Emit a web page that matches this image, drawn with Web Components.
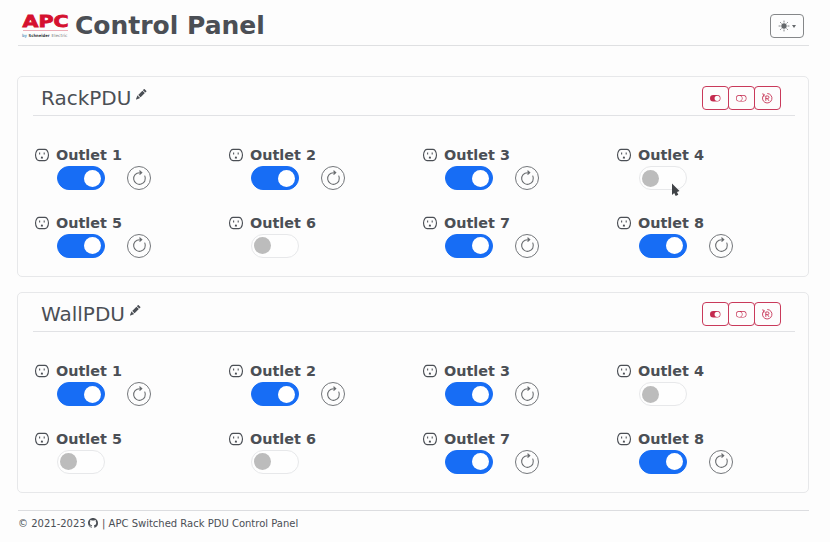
<!DOCTYPE html>
<html lang="en"><head><meta charset="utf-8"><title>APC Control Panel</title>
<style>
html,body{margin:0;height:100%;overflow:hidden;background:#fdfdfd}
body{font-family:"DejaVu Sans",sans-serif;color:#4b4f55}
</style></head><body>
<control-panel></control-panel>
<script>
const make = (name, html) => customElements.define(name, class extends HTMLElement {
  connectedCallback() {
    if (this.shadowRoot) return;
    this.attachShadow({mode:'open'}).innerHTML = typeof html === 'function' ? html(this) : html;
  }
});

const icons = {
  sun:'<circle cx="8" cy="8" r="4.3"/><path d="M8 0v1.8M8 14.2V16M0 8h1.8M14.2 8H16M2.3 2.3l1.2 1.2M12.5 12.5l1.2 1.2M2.3 13.7l1.2-1.2M12.5 3.5l1.2-1.2" stroke="currentColor" stroke-width="1.3" stroke-linecap="round"/>',
  pencil:'<path d="M12.854.146a.5.5 0 0 0-.707 0L10.5 1.793 14.207 5.5l1.647-1.646a.5.5 0 0 0 0-.708zm.646 6.061L9.793 2.5 3.293 9H3.5a.5.5 0 0 1 .5.5v.5h.5a.5.5 0 0 1 .5.5v.5h.5a.5.5 0 0 1 .5.5v.5h.5a.5.5 0 0 1 .5.5v.207zm-7.468 7.468A.5.5 0 0 1 6 13.5V13h-.5a.5.5 0 0 1-.5-.5V12h-.5a.5.5 0 0 1-.5-.5V11h-.5a.5.5 0 0 1-.5-.5V10h-.5a.5.5 0 0 1-.175-.032l-.179.178a.5.5 0 0 0-.11.168l-2 5a.5.5 0 0 0 .65.65l5-2a.5.5 0 0 0 .168-.11z"/>',
  outlet:'<path d="M4.600 1.600h6.800c1 0 1.700.4 2.300 1.100Q15.400 5 15.400 8t-1.700 5.300c-.6.700-1.300 1.100-2.300 1.100H4.600c-1 0-1.700-.4-2.300-1.100Q.6 11 .6 8t1.700-5.300C2.900 2 3.600 1.600 4.600 1.600z" fill="none" stroke="currentColor" stroke-width="1.300"/><path d="M5.300 5v2.300M10.500 5v2.300" stroke="currentColor" stroke-width="1.200"/><path d="M6.700 12v-1a1.200 1.200 0 0 1 2.400 0v1z"/>',
  restart:'<path fill-rule="evenodd" d="M8 3a5 5 0 1 0 4.546 2.914.5.5 0 0 1 .908-.417A6 6 0 1 1 8 2z"/><path d="M8 4.466V.534a.25.25 0 0 1 .41-.192l2.36 1.966c.12.1.12.284 0 .384L8.41 4.658A.25.25 0 0 1 8 4.466"/>',
  on:'<path d="M5 3a5 5 0 0 0 0 10h6a5 5 0 0 0 0-10zm6 9a4 4 0 1 1 0-8 4 4 0 0 1 0 8"/>',
  off:'<path d="M11 4a4 4 0 0 1 0 8H8a5 5 0 0 0 2-4 5 5 0 0 0-2-4zm-6 8a4 4 0 1 1 0-8 4 4 0 0 1 0 8M0 8a5 5 0 0 0 5 5h6a5 5 0 0 0 0-10H5a5 5 0 0 0-5 5"/>',
  reboot:'<path d="M2.6 3.2A7.2 7.2 0 1 0 8 .8M.3 1.3l3.2.9-.9 3.6" fill="none" stroke="currentColor" stroke-width="1.3"/><path d="M5.8 12V4.5h2.8a2 2 0 0 1 0 4H5.8M8.3 8.5l2.3 3.5" fill="none" stroke="currentColor" stroke-width="1.3"/>',
  github:'<path d="M8 0C3.58 0 0 3.58 0 8c0 3.54 2.29 6.53 5.47 7.59.4.07.55-.17.55-.38 0-.19-.01-.82-.01-1.49-2.01.37-2.53-.49-2.69-.94-.09-.23-.48-.94-.82-1.13-.28-.15-.68-.52-.01-.53.63-.01 1.08.58 1.23.82.72 1.21 1.87.87 2.33.66.07-.52.28-.87.51-1.07-1.78-.2-3.64-.89-3.64-3.95 0-.87.31-1.59.82-2.15-.08-.2-.36-1.02.08-2.12 0 0 .67-.21 2.2.82.64-.18 1.32-.27 2-.27s1.36.09 2 .27c1.53-1.04 2.2-.82 2.2-.82.44 1.1.16 1.92.08 2.12.51.56.82 1.27.82 2.15 0 3.07-1.87 3.75-3.65 3.95.29.25.54.73.54 1.48 0 1.07-.01 1.93-.01 2.2 0 .21.15.46.55.38A8.01 8.01 0 0 0 16 8c0-4.42-3.58-8-8-8"/>'
};
make('ui-icon', el => `<style>:host{display:inline-block;width:var(--s,12px);height:var(--s,12px);flex:none}svg{display:block;width:100%;height:100%}</style><svg viewBox="0 0 16 16" fill="currentColor" overflow="visible">${icons[el.getAttribute('name')]}</svg>`);

make('apc-logo', `<style>:host{display:block;width:48px;height:30px;flex:none}svg{display:block;overflow:visible}
.a{font:bold 16px "DejaVu Sans",sans-serif;fill:#d5112f;stroke:#d5112f;stroke-width:.8}.b{font:bold 4.2px "DejaVu Sans",sans-serif;fill:#34373c}</style>
<svg width="48" height="30" viewBox="0 -4 48 30"><text class="a" x="0.5" y="13" textLength="46" lengthAdjust="spacingAndGlyphs">APC</text>
<path d="M1 16.5h45" stroke="#e99aa6" stroke-width=".8"/>
<text class="b" x="0" y="23" textLength="5" lengthAdjust="spacingAndGlyphs" style="fill:#6d9fc4">by</text>
<text class="b" x="6.5" y="23" textLength="21" lengthAdjust="spacingAndGlyphs">Schneider</text>
<text class="b" x="29.5" y="23" textLength="16" lengthAdjust="spacingAndGlyphs" style="font-weight:400;fill:#777">Electric</text></svg>`);

make('theme-button', `<style>:host{display:flex;box-sizing:border-box;width:34px;height:24px;border:1px solid #858789;border-radius:4px;align-items:center;justify-content:center;gap:3px;color:#65686b;--s:10px}
i{border:2.5px solid transparent;border-top:3px solid #65686b;border-bottom:0}</style><ui-icon name="sun"></ui-icon><i></i>`);

make('page-header', `<style>:host{display:flex;box-sizing:border-box;height:46px;border-bottom:1px solid #dfe0e2;padding:0 5px 0 4px;align-items:flex-start}
apc-logo{margin-top:10px}h1{margin:9px auto 0 5px;font-size:25px;line-height:34px;font-weight:700;white-space:nowrap}theme-button{margin-top:14px}</style>
<apc-logo></apc-logo><h1><slot></slot></h1><theme-button></theme-button>`);

make('group-actions', `<style>:host{display:flex;height:24px;color:#c42b4f;--s:10.5px}
button{all:unset;box-sizing:border-box;width:27px;height:24px;border:1px solid #c93a5b;border-radius:4px;display:flex;align-items:center;justify-content:center}
button+button{margin-left:-1px}</style><button><ui-icon name="on"></ui-icon></button><button><ui-icon name="off"></ui-icon></button><button><ui-icon name="reboot"></ui-icon></button>`);

make('power-switch', `<style>:host{display:flex;box-sizing:border-box;width:48px;height:24px;border-radius:12px;border:1px solid #e7e8ea;background:#fefefe;align-items:center;padding:0 3px 0 2px}
i{width:17px;height:17px;border-radius:50%;background:#bcbcbc}
:host([on]){background:#176df5;border-color:#176df5;justify-content:flex-end}:host([on]) i{background:#fff}</style><i></i>`);

make('pdu-outlet', el => `<style>:host{display:block;height:67.5px}
.t{display:flex;align-items:center;height:20px;gap:7.5px;font-weight:700;font-size:14.4px;white-space:nowrap;--s:14px}
.c{display:flex;gap:22px;padding:1px 0 0 22.5px}
.r{box-sizing:border-box;width:24px;height:24px;border:1px solid #74777b;border-radius:50%;display:flex;align-items:center;justify-content:center;color:#6a6d70;--s:17px}</style>
<div class="t"><ui-icon name="outlet"></ui-icon><span><slot></slot></span></div>
<div class="c"><power-switch ${el.hasAttribute('on')?'on':''}></power-switch>${el.hasAttribute('on')?'<div class="r"><ui-icon name="restart"></ui-icon></div>':''}</div>`);

make('pdu-card', el => `<style>:host{display:block;box-sizing:border-box;height:201px;border:1px solid #e7e8ea;border-radius:5px;margin:0 0 15px -1px;padding:0 13px 0 15px}
header{display:flex;height:38px;border-bottom:1px solid #e1e2e5;padding:0 14px 0 8px;align-items:flex-start}
h2{margin:8px 0 0;font-size:20px;line-height:26px;font-weight:400;white-space:nowrap}
.e{margin:12px auto 0 5px;--s:10.5px}group-actions{margin-top:9px}
.g{display:grid;grid-template-columns:repeat(4,194px);padding:29px 0 0 1.5px;width:760px}</style>
<header><h2>${el.getAttribute('name')}</h2><ui-icon class="e" name="pencil"></ui-icon><group-actions></group-actions></header>
<div class="g">${[...el.getAttribute('states')].map((s,i)=>`<pdu-outlet ${s==='1'?'on':''}>Outlet ${i+1}</pdu-outlet>`).join('')}</div>`);

make('page-footer', `<style>:host{display:flex;align-items:center;height:25px;border-top:1px solid #dcdde0;margin-top:17px;font-size:10px;white-space:pre;--s:10px}ui-icon{margin:-1px .5px 0 -.5px}</style>
<span>© 2021-2023 </span><ui-icon name="github"></ui-icon><span> | APC Switched Rack PDU Control Panel</span>`);

make('mouse-pointer', `<style>:host{position:absolute;left:671px;top:183px}svg{display:block}</style><svg width="9" height="14"><path d="M1 .5v11.5l2.2-2 1.5 3 2.6-1.2L6 9l2.5-1z" fill="#404347"/></svg>`);

make('control-panel', `<style>:host{display:flow-root;box-sizing:border-box;width:830px;height:542px;padding:0 21px 0 18px}page-header{margin-bottom:30px}</style>
<page-header>Control Panel</page-header>
<pdu-card name="RackPDU" states="11101011"></pdu-card>
<pdu-card name="WallPDU" states="11100011"></pdu-card>
<page-footer></page-footer><mouse-pointer></mouse-pointer>`);
</script></body></html>
